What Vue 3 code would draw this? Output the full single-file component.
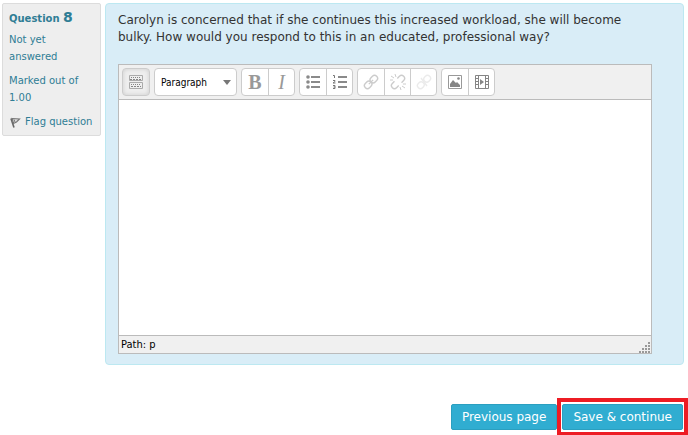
<script setup>
import { ref } from 'vue'

const format = ref('Paragraph')
const answer = ref('')
const flagged = ref(false)
const toolbarOpen = ref(true)

const formats = ['Paragraph', 'Heading (large)', 'Heading (medium)', 'Heading (small)', 'Preformatted']
</script>

<template>
  <form class="page" @submit.prevent>
    <div class="question">
      <!-- Question info -->
      <aside class="info">
        <h3>Question <span>8</span></h3>
        <p>Not yet answered</p>
        <p>Marked out of 1.00</p>
        <button type="button" class="flag" :aria-pressed="flagged" @click="flagged = !flagged">
          <svg width="12" height="12" viewBox="0 0 12 12">
            <path d="M2 2.5L5 11.5" stroke="#666" stroke-width="1.6" fill="none" />
            <path d="M3 2.500L10.500 3L7.500 6L4.500 7.500Z" stroke="#777" stroke-width="1.2" fill="#ddd" />
            <path d="M5 3.500L6 6" stroke="#777" fill="none" />
          </svg>
          Flag question
        </button>
      </aside>

      <!-- Question content -->
      <main class="content">
        <label class="text" for="answer">
          Carolyn is concerned that if she continues this increased workload, she will become
          bulky. How would you respond to this in an educated, professional way?
        </label>

        <div class="editor">
          <div class="toolbar">
            <div class="group toggle">
              <button type="button" aria-label="Toolbar toggle" :aria-pressed="toolbarOpen" @click="toolbarOpen = !toolbarOpen">
                <svg width="16" height="16" viewBox="0 0 16 16" fill="none" stroke="#858585">
                  <path d="M1.5 1.5h13v5h-13zM1.5 8.5h13v6h-13z" stroke="#aaa" />
                  <path d="M3 3.5h10M3 10.5h10" stroke-dasharray="1 1" />
                  <path d="M2 5.5h12M3 12.5h10" stroke-dasharray="2 1" />
                </svg>
              </button>
            </div>

            <div class="group format">
              <select v-model="format" aria-label="Format">
                <option v-for="item in formats" :key="item">{{ item }}</option>
              </select>
              <svg class="arrow" width="8" height="5" viewBox="0 0 8 5">
                <path d="M0 0h8L4 5z" fill="#777" />
              </svg>
            </div>

            <div class="group">
              <button type="button" class="letter bold" aria-label="Bold">B</button>
              <button type="button" class="letter italic" aria-label="Italic">I</button>
            </div>

            <div class="group">
              <button type="button" aria-label="Bullet list">
                <svg width="16" height="16" viewBox="0 0 16 16" fill="#8a8a8a">
                  <circle cx="3" cy="3" r="1.8" />
                  <circle cx="3" cy="8" r="1.8" />
                  <circle cx="3" cy="13" r="1.8" />
                  <path d="M6 2h9v2H6zM6 7h9v2H6zM6 12h9v2H6z" />
                </svg>
              </button>
              <button type="button" aria-label="Numbered list">
                <svg width="16" height="16" viewBox="0 0 16 16">
                  <path d="M6 2h9v2H6zM6 7h9v2H6zM6 12h9v2H6z" fill="#8a8a8a" />
                  <path d="M1 1.5h1.5V4M1 6.5h2v1L1 9h2.5M1 11.5h2v1.5H1.5M3 13v1.5H1" fill="none" stroke="#777" />
                </svg>
              </button>
            </div>

            <div class="group">
              <button type="button" aria-label="Link" disabled>
                <svg width="16" height="16" viewBox="0 0 16 16" fill="none" stroke="#ccc" stroke-width="1.4">
                  <g transform="rotate(-45 8 8)">
                    <rect x="0" y="5" width="8" height="6" rx="3" />
                    <rect x="8" y="5" width="8" height="6" rx="3" />
                    <path d="M5 8h6" />
                  </g>
                </svg>
              </button>
              <button type="button" aria-label="Unlink" disabled>
                <svg width="16" height="16" viewBox="0 0 16 16" fill="none" stroke="#ccc" stroke-width="1.4">
                  <g transform="rotate(-45 8 8)">
                    <path d="M6 5H3a3 3 0 0 0 0 6h3M10 5h3a3 3 0 0 1 0 6h-3" />
                  </g>
                  <path d="M1 2l3 2M5 0l1 3M0 6h3M15 14l-3-2M11 16l-1-3M16 10h-3" stroke-width="1" />
                </svg>
              </button>
              <button type="button" aria-label="Prevent automatic linking" disabled>
                <svg width="16" height="16" viewBox="0 0 16 16" fill="none" stroke="#ebebeb" stroke-width="1.4">
                  <g transform="rotate(-45 8 8)">
                    <rect x="0" y="5" width="7" height="6" rx="3" />
                    <rect x="9" y="5" width="7" height="6" rx="3" />
                  </g>
                  <path d="M5 4l6 8" />
                </svg>
              </button>
            </div>

            <div class="group">
              <button type="button" aria-label="Image">
                <svg width="16" height="16" viewBox="0 0 16 16">
                  <path d="M1.5 1.5h13v13h-13z" fill="none" stroke="#999" />
                  <path d="M3 13V10l3-4 3 3 1-1 3 3v2z" fill="#858585" />
                  <circle cx="11.5" cy="4.5" r="1.3" fill="#858585" />
                </svg>
              </button>
              <button type="button" aria-label="Moodle media">
                <svg width="16" height="16" viewBox="0 0 16 16">
                  <path d="M1.5 1.5h13v13h-13zM4.5 1v14M11.5 1v14" fill="none" stroke="#858585" />
                  <path d="M1 4.5h3M1 7.5h3M1 10.5h3M12 4.5h3M12 7.5h3M12 10.5h3" stroke="#858585" />
                  <path d="M6 5l4 3-4 3z" fill="#858585" />
                </svg>
              </button>
            </div>
          </div>

          <textarea id="answer" v-model="answer"></textarea>

          <div class="status">
            <span>Path: p</span>
            <svg width="12" height="12" viewBox="0 0 12 12">
              <g stroke="#999" stroke-width="2" stroke-dasharray="2 1">
                <path d="M0 11h12M3 8h9M6 5h6M9 2h3" />
              </g>
            </svg>
          </div>
        </div>
      </main>
    </div>

    <!-- Page navigation -->
    <div class="actions">
      <button type="button" class="nav">Previous page</button>
      <div class="highlight">
        <button type="submit" class="nav">Save &amp; continue</button>
      </div>
    </div>
  </form>
</template>

<style>
body {
  margin: 0;
  background: #fff;
}
</style>

<style scoped>
* {
  box-sizing: border-box;
}

.page {
  padding-top: 3px;
  font-family: Verdana, "DejaVu Sans", sans-serif;
  color: #333;
}

button,
select,
textarea {
  font-family: inherit;
  margin: 0;
}

.question {
  display: flex;
  align-items: flex-start;
  gap: 4px;
  padding: 0 4px 0 2px;
}

/* Info box */
.info {
  flex: 0 0 99px;
  padding: 5px 6px;
  background: #eee;
  border: 1px solid #dcdcdc;
  border-radius: 2px;
  color: #2f7d95;
  font-size: 10px;
  line-height: 17px;
}

.info h3 {
  margin: 0 0 4px;
  font-size: 10px;
  line-height: 17px;
}

.info h3 span {
  font-size: 14px;
}

.info p {
  margin: 0 0 7px;
}

.flag {
  display: flex;
  align-items: center;
  gap: 4px;
  padding: 0;
  border: 0;
  background: none;
  color: inherit;
  font-size: 10px;
  line-height: 17px;
  white-space: nowrap;
  cursor: pointer;
}

/* Content */
.content {
  flex: 1;
  min-width: 0;
  padding: 8px 31px 10px 12px;
  background: #d9edf7;
  border: 1px solid #bce8f1;
  border-radius: 4px;
}

.text {
  display: block;
  margin-bottom: 18px;
  font-size: 12px;
  line-height: 17px;
}

/* Editor */
.editor {
  border: 1px solid #bbb;
  background: #f0f0f0;
}

.toolbar {
  display: flex;
  flex-wrap: wrap;
  gap: 4px;
  padding: 3px;
  border-bottom: 1px solid #bbb;
}

.group {
  display: flex;
  height: 28px;
  background: #fff;
  border: 1px solid #ccc;
  border-radius: 4px;
  overflow: hidden;
}

.group button {
  display: flex;
  align-items: center;
  justify-content: center;
  width: 26px;
  padding: 0;
  border: 0;
  background: none;
  cursor: pointer;
}

.group button + button {
  border-left: 1px solid #ccc;
}

.toggle {
  background: #eee;
  box-shadow: inset 0 0 4px #ccc;
}

.format {
  position: relative;
  width: 83px;
}

.format select {
  width: 100%;
  padding: 0 20px 0 6px;
  border: 0;
  appearance: none;
  background: none;
  color: #000;
  font-family: Tahoma, "DejaVu Sans Condensed", "DejaVu Sans", sans-serif;
  font-size: 10px;
}

.arrow {
  position: absolute;
  top: 11px;
  right: 5px;
  pointer-events: none;
}

.group .letter {
  color: #999;
  font-family: "Liberation Serif", serif;
  font-size: 20px;
}

.bold {
  font-weight: bold;
}

.italic {
  font-style: italic;
}

textarea {
  display: block;
  width: 100%;
  height: 235px;
  padding: 8px;
  border: 0;
  outline: 0;
  resize: none;
  background: #fff;
  color: #333;
  font-size: 12px;
}

.status {
  display: flex;
  align-items: flex-end;
  justify-content: space-between;
  height: 18px;
  padding-left: 2px;
  border-top: 1px solid #bbb;
  color: #000;
  font-family: Tahoma, "DejaVu Sans Condensed", "DejaVu Sans", sans-serif;
  font-size: 11px;
  line-height: 17px;
}

/* Navigation buttons */
.actions {
  display: flex;
  align-items: center;
  justify-content: flex-end;
  margin-top: 33px;
}

.nav {
  height: 26px;
  padding: 0 10px;
  border: 1px solid #2b9fc0;
  border-radius: 2px;
  background: #30add1;
  color: #fff;
  font-size: 12px;
  white-space: nowrap;
  cursor: pointer;
}

.highlight {
  display: flex;
  padding: 2px 1px;
  border: 4px solid #ed1c24;
}
</style>
